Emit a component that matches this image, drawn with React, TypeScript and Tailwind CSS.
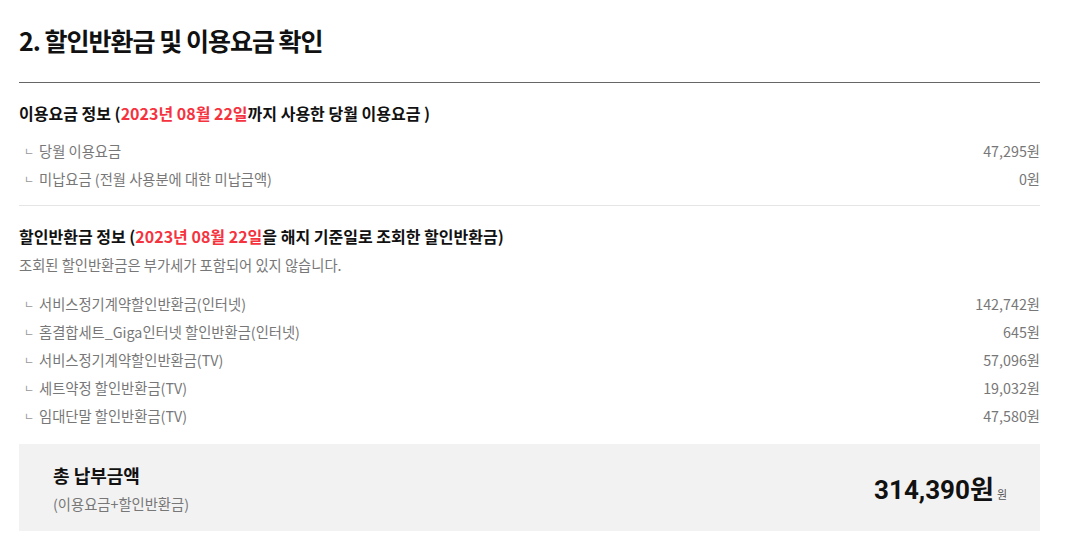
import React from 'react';

interface FeeRow {
  label: string;
  amount: string;
}

const usageRows: FeeRow[] = [
  { label: '당월 이용요금', amount: '47,295원' },
  { label: '미납요금 (전월 사용분에 대한 미납금액)', amount: '0원' },
];

const refundRows: FeeRow[] = [
  { label: '서비스정기계약할인반환금(인터넷)', amount: '142,742원' },
  { label: '홈결합세트_Giga인터넷 할인반환금(인터넷)', amount: '645원' },
  { label: '서비스정기계약할인반환금(TV)', amount: '57,096원' },
  { label: '세트약정 할인반환금(TV)', amount: '19,032원' },
  { label: '임대단말 할인반환금(TV)', amount: '47,580원' },
];

function Row({ row }: { row: FeeRow }) {
  return (
    <li className="flex items-center justify-between h-[28px] text-[14.3px] text-[#777]">
      <div className="flex items-center">
        <span className="w-[20px] pl-[5px] text-[11px] text-[#999]">ㄴ</span>
        <span>{row.label}</span>
      </div>
      <span>{row.amount}</span>
    </li>
  );
}

export default function App() {
  return (
    <div
      className="w-[1066px] h-[541px] bg-white text-[#111] px-[19px] pr-[26px]"
      style={{ fontFamily: '"Noto Sans CJK KR", "Noto Sans", sans-serif' }}
    >
      <h1 className="pt-[21px] h-[82px] text-[25px] font-bold tracking-[-1px] leading-[38px]">
        2. 할인반환금 및 이용요금 확인
      </h1>
      <div className="h-px bg-[#666]" />

      {/* 이용요금 */}
      <div className="pt-[17px] pb-[12px]">
        <h2 className="text-[16px] font-bold leading-[26px]">
          이용요금 정보 (<span className="text-[#f5333f]">2023년 08월 22일</span>까지 사용한 당월 이용요금 )
        </h2>
        <ul className="mt-[11px]">
          {usageRows.map((row) => (
            <Row key={row.label} row={row} />
          ))}
        </ul>
      </div>
      <div className="h-px bg-[#e5e5e5]" />

      {/* 할인반환금 */}
      <div className="pt-[17px] pb-[14px]">
        <h2 className="text-[16px] font-bold leading-[26px]">
          할인반환금 정보 (<span className="text-[#f5333f]">2023년 08월 22일</span>을 해지 기준일로 조회한 할인반환금)
        </h2>
        <p className="text-[14.3px] text-[#777] leading-[22px] mt-[5px]">
          조회된 할인반환금은 부가세가 포함되어 있지 않습니다.
        </p>
        <ul className="mt-[14px]">
          {refundRows.map((row) => (
            <Row key={row.label} row={row} />
          ))}
        </ul>
      </div>

      {/* 총 납부금액 */}
      <div className="h-[87px] bg-[#f2f2f2] flex items-center justify-between pl-[34px] pr-[33px]">
        <div>
          <div className="text-[18px] font-bold leading-[28px]">총 납부금액</div>
          <div className="text-[14.3px] text-[#777] leading-[22px] mt-[4px]">(이용요금+할인반환금)</div>
        </div>
        <div className="flex items-baseline mt-[6px]">
          <span
            className="text-[26px] font-bold"
            style={{ fontFamily: 'Roboto, "Noto Sans CJK KR", sans-serif' }}
          >
            314,390원
          </span>
          <span className="text-[11px] text-[#555] ml-[3px]">원</span>
        </div>
      </div>
    </div>
  );
}
